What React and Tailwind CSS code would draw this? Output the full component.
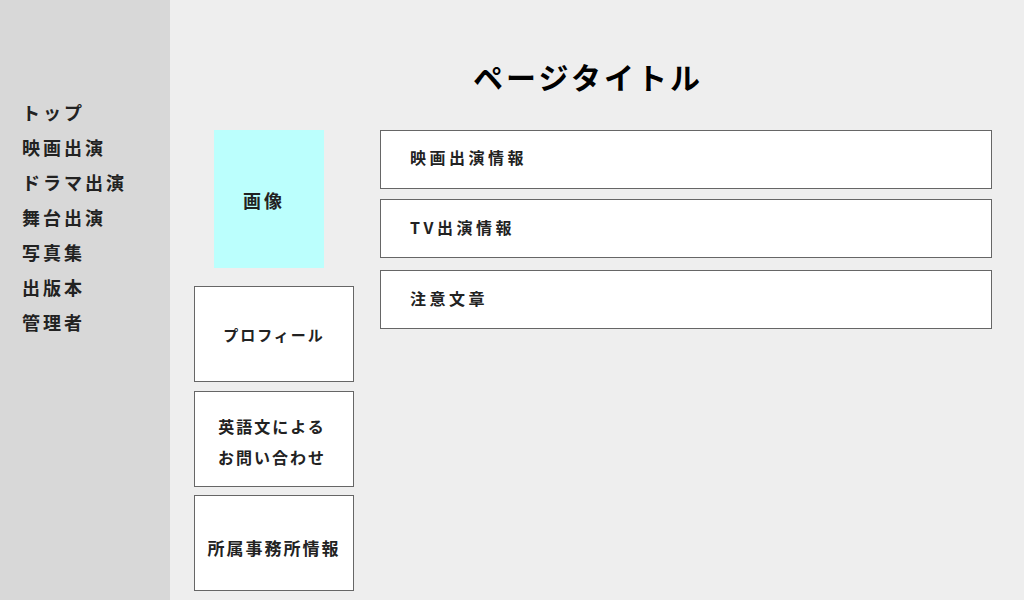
const sideItems = ['トップ', '映画出演', 'ドラマ出演', '舞台出演', '写真集', '出版本', '管理者'];

const font = { fontFamily: '"Noto Sans CJK JP", "Noto Sans", sans-serif' };

const App = () => {
    return (
        <div className="flex w-[1024px] h-[600px] overflow-hidden text-[#222]" style={font}>
            <aside className="w-[170px] shrink-0 bg-[#d8d8d8] pt-[95px] pl-[22px]">
                {sideItems.map((item) => (
                    <div key={item} className="h-[35px] leading-[35px] text-[18px] font-bold tracking-[3px]">
                        {item}
                    </div>
                ))}
            </aside>

            <main className="flex-1 bg-[#eeeeee]">
                <h1 className="pt-[54px] pr-[18px] h-[100px] text-center text-[30px] leading-[45px] font-bold tracking-[3px] text-black">
                    ページタイトル
                </h1>

                <div className="flex mt-[30px]">
                    <div className="w-[160px] ml-[24px] flex flex-col">
                        <div className="ml-[20px] w-[110px] h-[138px] bg-[#bbfffd] flex items-center justify-center pr-[10px] pt-[3px] text-[18px] font-bold tracking-[3px]">
                            画像
                        </div>
                        <div className="mt-[18px] h-[96px] bg-white border border-[#666] flex items-center justify-center pt-[3px] text-[15px] font-bold tracking-[2px]">
                            プロフィール
                        </div>
                        <div className="mt-[9px] h-[96px] bg-white border border-[#666] flex items-center justify-center pr-[4px] pt-[5px] text-center text-[16px] leading-[31px] font-bold tracking-[2px]">
                            英語文による<br />お問い合わせ
                        </div>
                        <div className="mt-[8px] h-[96px] bg-white border border-[#666] flex items-center justify-center pt-[10px] text-[17px] font-bold tracking-[2px]">
                            所属事務所情報
                        </div>
                    </div>

                    <div className="ml-[26px] w-[612px] flex flex-col">
                        <div className="h-[59px] bg-white border border-[#666] flex items-center pl-[29px] pb-[6px] text-[16px] font-bold tracking-[3.5px]">
                            映画出演情報
                        </div>
                        <div className="mt-[10px] h-[59px] bg-white border border-[#666] flex items-center pl-[29px] pb-[4px] text-[16px] font-bold tracking-[3.5px]">
                            TV出演情報
                        </div>
                        <div className="mt-[12px] h-[59px] bg-white border border-[#666] flex items-center pl-[29px] pb-[3px] text-[16px] font-bold tracking-[3.5px]">
                            注意文章
                        </div>
                    </div>
                </div>
            </main>
        </div>
    );
};

export default App;
